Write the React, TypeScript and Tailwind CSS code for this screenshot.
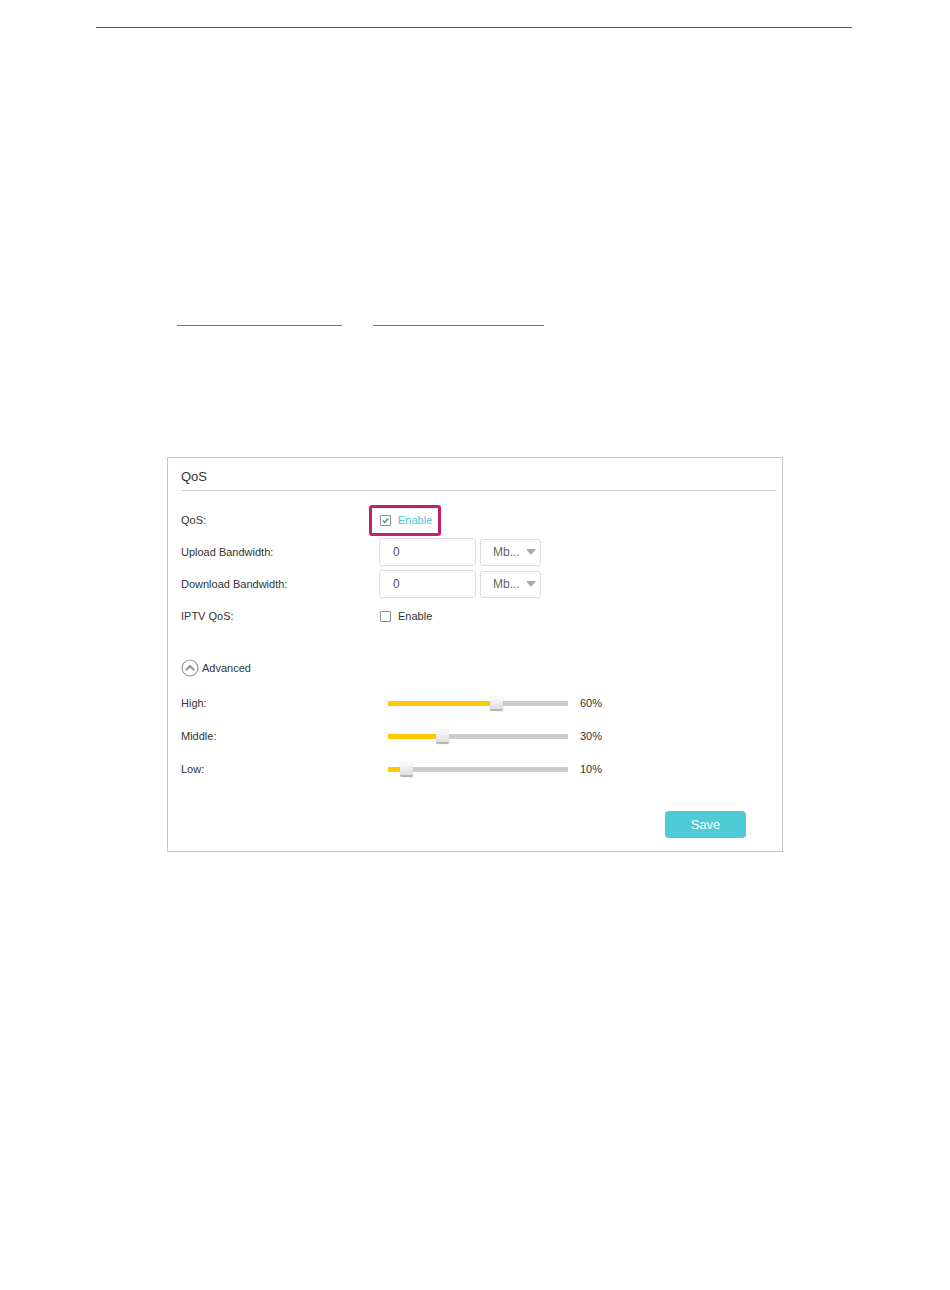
import React from "react";

const Checkbox = ({ checked }: { checked?: boolean }) => (
  <span className="flex h-[11px] w-[11px] items-center justify-center rounded-[1px] border border-[#8f8f8f] bg-white">
    {checked && (
      <svg width="9" height="9" viewBox="0 0 9 9">
        <path d="M1.8 4.6 L3.7 6.4 L7.2 2.4" fill="none" stroke="#5a9aa8" strokeWidth="1.6" />
      </svg>
    )}
  </span>
);

const Slider = ({ pct }: { pct: number }) => {
  const pos = (pct / 100) * 180;
  return (
    <div className="flex items-center">
      <div className="relative ml-[9px] h-[5px] w-[180px] bg-[#cccccc]">
        <div className="absolute left-0 top-0 h-[5px] bg-[#ffc800]" style={{ width: pos }} />
        <div
          className="absolute top-[-4px] h-[14px] w-[13px] rounded-[2px] border-b-2 border-[#b5b5b5] bg-gradient-to-b from-[#fbfbfb] to-[#dedede] shadow-[0_0_1px_#999]"
          style={{ left: pos - 6.5 }}
        />
      </div>
      <span className="ml-[12px] text-[11px] text-[#333]">{pct}%</span>
    </div>
  );
};

const Row = ({ label, h, children }: { label: string; h: string; children?: React.ReactNode }) => (
  <div className={`flex items-center ${h}`}>
    <div className="w-[198px] text-[11px] text-[#333]">{label}</div>
    <div className="flex items-center">{children}</div>
  </div>
);

const Input = () => (
  <div className="flex items-center">
    <div className="flex h-[28px] w-[97px] items-center rounded-[3px] border border-[#dcdcdc] pl-[13px] text-[12px] text-[#555]">0</div>
    <div className="ml-[4px] flex h-[27px] w-[61px] items-center justify-between rounded-[3px] border border-[#dcdcdc] pl-[12px] pr-[4px] text-[12px] text-[#666]">
      <span>Mb...</span>
      <svg width="10" height="7" viewBox="0 0 10 7">
        <path d="M0 0 H10 L5 6 Z" fill="#a8a8a8" />
      </svg>
    </div>
  </div>
);

export default function App() {
  return (
    <div className="min-h-[1290px] w-[950px] bg-white" style={{ fontFamily: '"Liberation Sans", Arial, sans-serif' }}>
      <div className="pt-[27px]">
        <div className="ml-[96px] h-px w-[756px] bg-[#555]" />
      </div>
      <div className="mt-[297px] flex">
        <div className="ml-[177px] h-px w-[165px] bg-[#4a8694]" />
        <div className="ml-[31px] h-px w-[171px] bg-[#4a8694]" />
      </div>
      <div className="ml-[167px] mt-[131px] w-[616px] border border-[#c4c4c4] pb-[13px] pl-[13px] pr-[6px]">
        <div className="flex h-[32px] items-end pb-[4px] text-[13px] text-[#333]">QoS</div>
        <div className="h-px bg-[#cfcfcf]" />
        <div className="mt-[13px]">
          <Row label="QoS:" h="h-[32px]">
            <div className="-ml-[10px] flex h-[31px] w-[72px] items-center gap-[7px] rounded-[3px] border-[3px] border-[#c4206c] pl-[8px]">
              <Checkbox checked />
              <span className="text-[11px] text-[#4cc6d2]">Enable</span>
            </div>
          </Row>
          <Row label="Upload Bandwidth:" h="h-[32px]">
            <Input />
          </Row>
          <Row label="Download Bandwidth:" h="h-[32px]">
            <Input />
          </Row>
          <Row label="IPTV QoS:" h="h-[33px]">
            <div className="ml-[1px] flex items-center gap-[7px]">
              <Checkbox />
              <span className="text-[11px] text-[#333]">Enable</span>
            </div>
          </Row>
        </div>
        <div className="mt-[25px] flex h-[20px] items-center">
          <svg width="18" height="18" viewBox="0 0 18 18">
            <circle cx="9" cy="9" r="8" fill="none" stroke="#9a9a9a" strokeWidth="1.2" />
            <path d="M5.5 10.5 L9 7 L12.5 10.5" fill="none" stroke="#9a9a9a" strokeWidth="2.4" strokeLinecap="round" strokeLinejoin="round" />
          </svg>
          <span className="ml-[3px] text-[11px] text-[#333]">Advanced</span>
        </div>
        <div className="mt-[9px]">
          <Row label="High:" h="h-[33px]">
            <Slider pct={60} />
          </Row>
          <Row label="Middle:" h="h-[33px]">
            <Slider pct={30} />
          </Row>
          <Row label="Low:" h="h-[33px]">
            <Slider pct={10} />
          </Row>
        </div>
        <div className="mt-[25px] flex justify-end pr-[30px]">
          <button className="h-[27px] w-[81px] rounded-[4px] bg-[#4ecbd6] text-[13px] text-white">Save</button>
        </div>
      </div>
    </div>
  );
}
